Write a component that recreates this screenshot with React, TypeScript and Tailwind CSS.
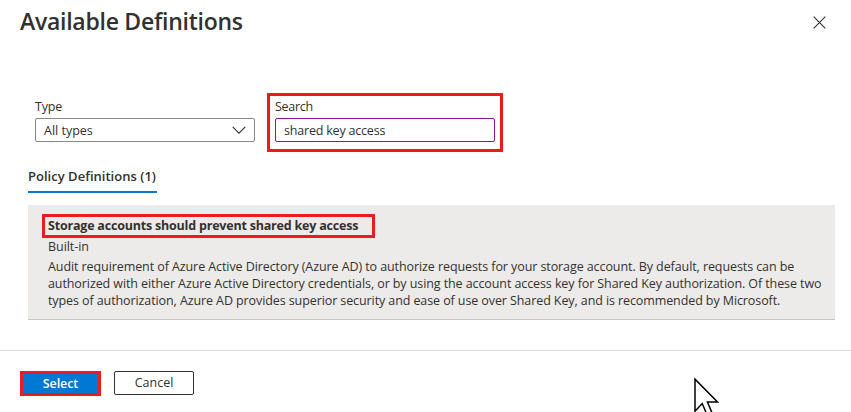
import React from "react";

function Field({ label, track, children }: { label: string; track: string; children: React.ReactNode }) {
  return (
    <div className="w-[220px]">
      <div className={`h-[18px] pt-px text-[12.5px] leading-[18px] ${track}`}>{label}</div>
      <div className="mt-[3px]">{children}</div>
    </div>
  );
}

const description = [
  { text: "Audit requirement of Azure Active Directory (Azure AD) to authorize requests for your storage account. By default, requests can be", track: "tracking-[-0.085px]" },
  { text: "authorized with either Azure Active Directory credentials, or by using the account access key for Shared Key authorization. Of these two", track: "tracking-[-0.09px]" },
  { text: "types of authorization, Azure AD provides superior security and ease of use over Shared Key, and is recommended by Microsoft.", track: "tracking-[-0.095px]" },
];

export default function App() {
  return (
    <div className="relative h-[412px] w-[851px] overflow-hidden bg-white font-['Open_Sans','Noto_Sans',sans-serif] text-[12.5px] text-[#323130]">
      <header className="flex h-[93px] items-start justify-between pl-5 pr-[25px]">
        <h1 className="mt-[5px] whitespace-nowrap text-[23px] font-semibold leading-8 tracking-[-0.26px]">
          Available Definitions
        </h1>
        <button aria-label="Close" className="mt-[16px]">
          <svg width="13" height="13" viewBox="0 0 13 13" fill="none" stroke="#323130" strokeWidth="1.1">
            <path d="M.7.7 12.3 12.3M12.3.7.7 12.3" />
          </svg>
        </button>
      </header>

      <section className="flex h-[59px] items-start pl-[35px]">
        <div className="mt-[4px]">
          <Field label="Type" track="tracking-[-0.15px]">
            <div className="flex h-6 items-center justify-between rounded-[2px] border border-[#8a8886] pl-2 pr-2">
              <span className="pt-[2px] tracking-[0px]">All types</span>
              <svg width="14" height="8" viewBox="0 0 14 8" fill="none" stroke="#323130" strokeWidth="1.1">
                <path d="m.7.8 6.3 6.3L13.3.8" />
              </svg>
            </div>
          </Field>
        </div>
        <div className="ml-3 h-[59px] w-[236px] border-3 border-[#eb1c1c] pl-[5px] pt-[1px]">
          <Field label="Search" track="tracking-[-0.3px]">
            <div className="flex h-6 items-center rounded-[2px] border border-[#881798] pl-2">
              <span className="pt-[2px] tracking-[-0.2px]">shared key access</span>
            </div>
          </Field>
        </div>
      </section>

      <nav className="ml-7 mt-4 h-[25px] w-[129px] border-b-2 border-[#0078d4]">
        <span className="block whitespace-nowrap text-[13px] font-semibold leading-[17px] tracking-[0.02px]">Policy Definitions (1)</span>
      </nav>

      <article className="ml-7 mt-3 h-[115px] w-[807px] border-b border-[#c8c6c4] bg-[#edebe9] pl-[14px] pt-[9px]">
        <div className="h-6 w-[333px] whitespace-nowrap border-3 border-[#eb1c1c] pl-[3px] text-[12.5px] font-bold leading-[18px] tracking-[-0.2px]">
          Storage accounts should prevent shared key access
        </div>
        <div className="ml-[6px] h-5 leading-[18px] tracking-[-0.05px]">Built-in</div>
        <div className="ml-[6px] leading-[17px]">
          {description.map((line) => (
            <div key={line.text} className={`whitespace-nowrap ${line.track}`}>{line.text}</div>
          ))}
        </div>
      </article>

      <footer className="mt-[30px] flex h-[62px] gap-[13px] border-t border-[#dedede] pl-5 pt-5">
        <button className="h-[25px] w-[81px] border-3 border-[#eb1c1c] bg-[#0078d4] text-[12.5px] font-semibold leading-[18px] tracking-[-0.1px] text-white">Select</button>
        <button className="h-6 w-20 rounded-[2px] border border-[#323130] text-[12.5px] leading-[20px]">Cancel</button>
      </footer>

      <svg className="absolute left-[693px] top-[377px]" width="28" height="35" viewBox="0 0 28 35" fill="#fff" stroke="#000" strokeWidth="1.5">
        <path d="M2 2.2v32l7.2-7.7 6 14 5-2L14.4 25H24.5Z" />
      </svg>
    </div>
  );
}
